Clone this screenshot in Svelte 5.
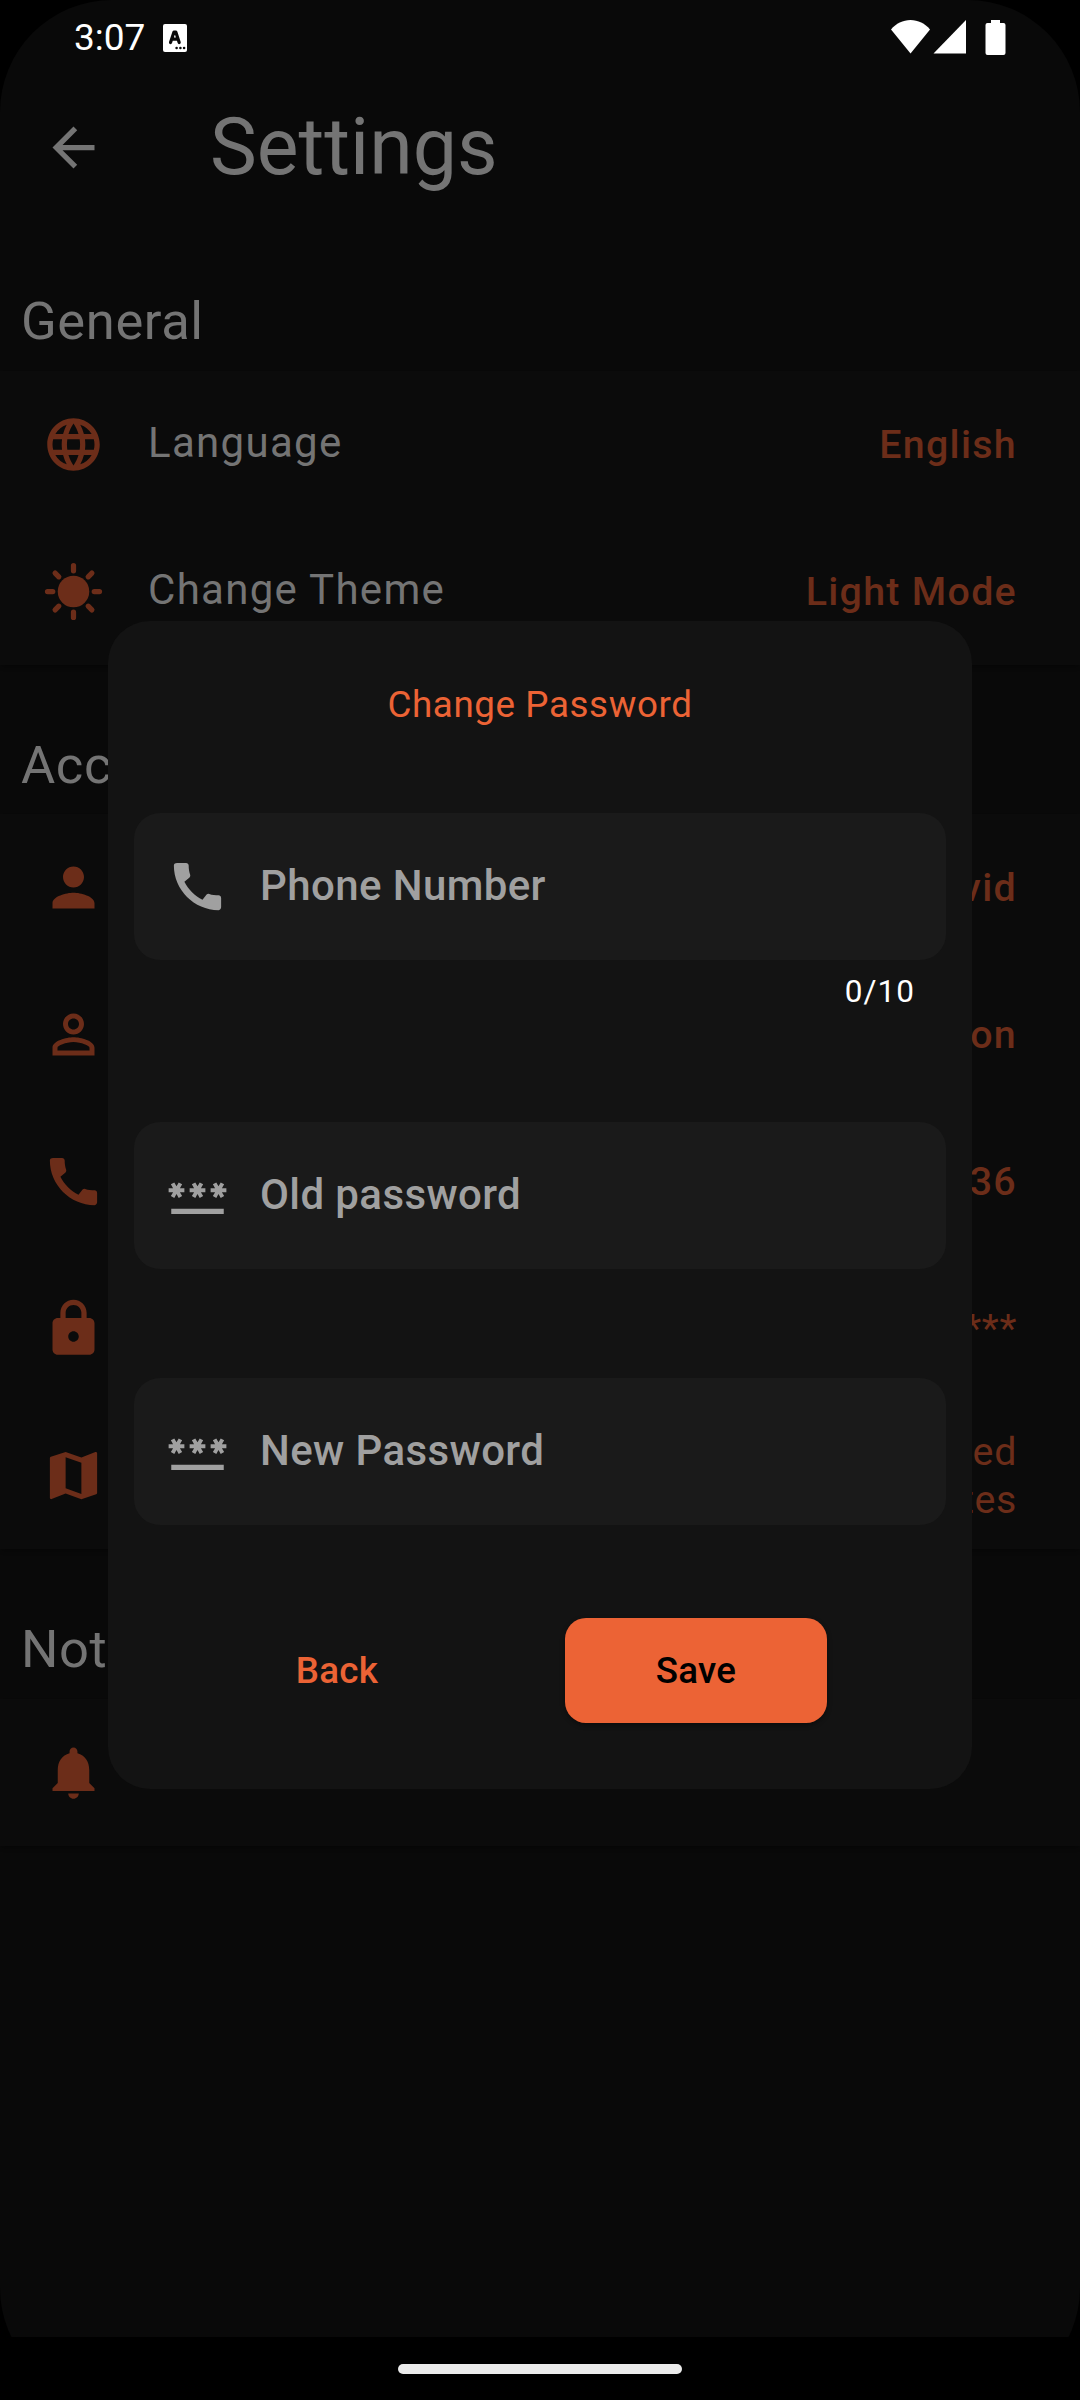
<script>
  const icons = {
    back: 'M20 11H7.83l5.59-5.59L12 4l-8 8 8 8 1.41-1.41L7.83 13H20v-2z',
    globe:
      'M11.99 2C6.47 2 2 6.48 2 12s4.47 10 9.99 10C17.52 22 22 17.52 22 12S17.52 2 11.99 2zm6.93 6h-2.95a15.65 15.65 0 0 0-1.38-3.56A8.03 8.03 0 0 1 18.92 8zM12 4.04c.83 1.2 1.48 2.53 1.91 3.96h-3.82c.43-1.43 1.08-2.76 1.91-3.96zM4.26 14C4.1 13.36 4 12.69 4 12s.1-1.36.26-2h3.38c-.08.66-.14 1.32-.14 2s.06 1.34.14 2H4.26zm.82 2h2.95c.32 1.25.78 2.45 1.38 3.56A7.987 7.987 0 0 1 5.08 16zm2.95-8H5.08a7.987 7.987 0 0 1 4.33-3.56A15.65 15.65 0 0 0 8.03 8zM12 19.96c-.83-1.2-1.48-2.53-1.91-3.96h3.82c-.43 1.43-1.08 2.76-1.91 3.96zM14.34 14H9.66c-.09-.66-.16-1.32-.16-2s.07-1.35.16-2h4.68c.09.65.16 1.32.16 2s-.07 1.34-.16 2zm.25 5.56c.6-1.11 1.06-2.31 1.38-3.56h2.95a8.03 8.03 0 0 1-4.33 3.56zM16.36 14c.08-.66.14-1.32.14-2s-.06-1.34-.14-2h3.38c.16.64.26 1.31.26 2s-.1 1.36-.26 2h-3.38z',
    person:
      'M12 12c2.21 0 4-1.79 4-4s-1.79-4-4-4-4 1.79-4 4 1.79 4 4 4zm0 2c-2.67 0-8 1.34-8 4v2h16v-2c0-2.66-5.33-4-8-4z',
    personOutline:
      'M12 5.9c1.16 0 2.1.94 2.1 2.1s-.94 2.1-2.1 2.1S9.9 9.16 9.9 8s.94-2.1 2.1-2.1m0 9c2.97 0 6.1 1.46 6.1 2.1v1.1H5.9V17c0-.64 3.13-2.1 6.1-2.1M12 4C9.79 4 8 5.79 8 8s1.79 4 4 4 4-1.79 4-4-1.79-4-4-4zm0 9c-2.67 0-8 1.34-8 4v3h16v-3c0-2.66-5.33-4-8-4z',
    call:
      'M20.01 15.38c-1.23 0-2.42-.2-3.53-.56a.977.977 0 0 0-1.01.24l-1.57 1.97c-2.83-1.35-5.48-3.9-6.89-6.83l1.95-1.66c.27-.28.35-.67.24-1.02-.37-1.11-.56-2.3-.56-3.53 0-.54-.45-.99-.99-.99H4.19C3.65 3 3 3.24 3 3.99 3 13.28 10.73 21 20.01 21c.71 0 .99-.63.99-1.18v-3.45c0-.54-.45-.99-.99-.99z',
    lock:
      'M18 8h-1V6c0-2.76-2.24-5-5-5S7 3.24 7 6v2H6c-1.1 0-2 .9-2 2v10c0 1.1.9 2 2 2h12c1.1 0 2-.9 2-2V10c0-1.1-.9-2-2-2zm-6 9c-1.1 0-2-.9-2-2s.9-2 2-2 2 .9 2 2-.9 2-2 2zM9 8V6c0-1.66 1.34-3 3-3s3 1.34 3 3v2H9z',
    map:
      'M20.5 3l-.16.03L15 5.1 9 3 3.36 4.9c-.21.07-.36.25-.36.48V20.5c0 .28.22.5.5.5l.16-.03L9 18.9l6 2.1 5.64-1.9c.21-.07.36-.25.36-.48V3.5c0-.28-.22-.5-.5-.5zM15 19l-6-2.11V5l6 2.11V19z',
    bell:
      'M12 22c1.1 0 2-.9 2-2h-4c0 1.1.89 2 2 2zm6-6v-5c0-3.07-1.64-5.64-4.5-6.32V4c0-.83-.67-1.5-1.5-1.5s-1.5.67-1.5 1.5v.68C7.63 5.36 6 7.92 6 11v5l-2 2v1h16v-1l-2-2z',
    password:
      'M2 17h20v2H2v-2zm1.15-4.05L4 11.47l.85 1.48 1.3-.75-.85-1.48H7v-1.5H5.3l.85-1.47L4.85 7 4 8.47 3.15 7l-1.3.75.85 1.47H1v1.5h1.7l-.85 1.48 1.3.75zm6.7-.75l1.3.75.85-1.48.85 1.48 1.3-.75-.85-1.48H15v-1.5h-1.7l.85-1.47-1.3-.75L12 8.47 11.15 7l-1.3.75.85 1.47H9v1.5h1.7l-.85 1.48zM23 9.22h-1.7l.85-1.47-1.3-.75L20 8.47 19.15 7l-1.3.75.85 1.47H17v1.5h1.7l-.85 1.48 1.3.75.85-1.48.85 1.48 1.3-.75-.85-1.48H23v-1.5z'
  };

  const sections = [
    {
      title: 'General',
      rows: [
        { icon: 'globe', label: 'Language', value: 'English' },
        { icon: 'sun', label: 'Change Theme', value: 'Light Mode' }
      ]
    },
    {
      title: 'Acco',
      rows: [
        { icon: 'person', value: 'vid' },
        { icon: 'personOutline', value: 'on' },
        { icon: 'call', value: '36' },
        { icon: 'lock', value: '***', light: true },
        { icon: 'map', value: 'ted\ntes', light: true }
      ]
    },
    { title: 'Not', rows: [{ icon: 'bell', value: '' }] }
  ];

  const fields = [
    { icon: 'call', label: 'Phone Number', counter: '0/10' },
    { icon: 'password', label: 'Old password' },
    { icon: 'password', label: 'New Password' }
  ];
</script>

{#snippet icon(name)}
  <svg class="icon" viewBox="0 0 24 24" aria-hidden="true">
    {#if name === 'sun'}
      <circle cx="12" cy="12" r="6" />
      <path
        class="rays"
        d="M12 2.1v2M12 19.9v2M2.1 12h2M19.9 12h2M5 5l1.4 1.4M17.6 17.6L19 19M5 19l1.4-1.4M17.6 6.4L19 5"
      />
    {:else}
      <path fill-rule="evenodd" d={icons[name]} />
    {/if}
  </svg>
{/snippet}

<div class="device">
  <div class="screen">
    <div class="status">
      <span class="time">3:07</span>
      <svg class="badge" viewBox="0 0 24 28" aria-hidden="true">
        <rect width="24" height="28" rx="2" fill="#fff" />
        <path
          d="M7.5 18.6L11 8h1.8L16.2 18.6M9 15.2h6"
          fill="none"
          stroke="#090909"
          stroke-width="3.2"
          stroke-linecap="round"
          stroke-linejoin="round"
        />
        <circle cx="13.6" cy="24" r="1.3" />
        <circle cx="17.4" cy="24" r="1.3" />
        <circle cx="21.1" cy="24" r="1.3" />
      </svg>
      <svg class="signals" viewBox="0 0 115 35" aria-hidden="true">
        <path d="M0 9.5C5 3.5 12 0 19.5 0S34 3.5 39 9.5L19.5 33.5z" />
        <path d="M75 0v33.5H42.5z" />
        <path
          d="M100 0h9v3h3.5a2 2 0 0 1 2 2v28a2 2 0 0 1-2 2h-16a2 2 0 0 1-2-2V5a2 2 0 0 1 2-2h3.5z"
        />
      </svg>
    </div>

    <header>
      {@render icon('back')}
      <h1>Settings</h1>
    </header>

    {#each sections as section}
      <h2>{section.title}</h2>
      <ul>
        {#each section.rows as row}
          <li>
            {@render icon(row.icon)}
            <span class="label">{row.label ?? ''}</span>
            <span class="value" class:light={row.light}>{row.value}</span>
          </li>
        {/each}
      </ul>
    {/each}
  </div>

  <div class="navbar"><span class="handle"></span></div>

  <div class="overlay">
    <div class="dialog">
      <h3>Change Password</h3>
      {#each fields as field}
        <div class="group" class:counted={field.counter}>
          <div class="field">
            {@render icon(field.icon)}
            <span>{field.label}</span>
          </div>
          {#if field.counter}<div class="counter">{field.counter}</div>{/if}
        </div>
      {/each}
      <div class="actions">
        <button class="text">Back</button>
        <button class="filled">Save</button>
      </div>
    </div>
  </div>
</div>

<style>
  :global(body) {
    background: #000;
  }
  .device {
    position: relative;
    width: 1080px;
    height: 2400px;
    overflow: hidden;
    border-radius: 112px;
    background: #000;
    font-family: Roboto, sans-serif;
    color: #747474;
  }
  .screen {
    height: 2337px;
    background: #090909;
  }
  .icon {
    display: block;
    flex: none;
    width: 63px;
    height: 63px;
    fill: currentColor;
  }
  .rays {
    stroke: currentColor;
    stroke-width: 2;
    stroke-linecap: round;
  }
  .status {
    display: flex;
    align-items: center;
    box-sizing: border-box;
    height: 74px;
    padding: 0 74px;
    color: #fff;
  }
  .time {
    width: 89px;
    padding-top: 1px;
    font-size: 37px;
    line-height: 74px;
  }
  .badge {
    width: 24px;
    height: 28px;
    margin-top: 2px;
    fill: #090909;
  }
  .signals {
    width: 115px;
    height: 35px;
    margin-left: auto;
    fill: #fff;
  }
  header {
    display: flex;
    align-items: center;
    height: 148px;
    padding-left: 42px;
  }
  header .icon {
    margin-bottom: 2px;
  }
  h1 {
    margin: -2px 0 0 105px;
    font-size: 78.75px;
    font-weight: 400;
  }
  h2 {
    box-sizing: border-box;
    height: 149px;
    margin: 0;
    padding: 68px 21px 0;
    font-size: 52.5px;
    font-weight: 400;
    line-height: 63px;
    letter-spacing: 0.6px;
  }
  ul + h2 {
    padding-top: 69px;
  }
  h2:last-of-type {
    height: 150px;
  }
  ul {
    margin: 0;
    padding: 0;
    list-style: none;
    background: #0b0b0b;
    box-shadow: 0 3px 4px -1px rgba(0, 0, 0, 0.3);
  }
  li {
    display: flex;
    align-items: center;
    box-sizing: border-box;
    height: 147px;
    padding: 0 63px 0 42px;
    color: #6c2d19;
  }
  .label {
    margin: -4px 0 0 43px;
    font-size: 42px;
    letter-spacing: 1.3px;
    color: #747474;
  }
  .value {
    margin-left: auto;
    font-size: 39.375px;
    font-weight: 500;
    line-height: 48px;
    letter-spacing: 1.3px;
    text-align: right;
    white-space: pre-line;
  }
  .value.light {
    font-weight: 400;
    letter-spacing: 0.65px;
  }
  .navbar {
    display: flex;
    align-items: center;
    justify-content: center;
    height: 63px;
    background: #000;
  }
  .handle {
    width: 284px;
    height: 10px;
    border-radius: 5px;
    background: #ebebeb;
  }
  .overlay {
    position: absolute;
    inset: 0;
    padding: 621px 108px 0;
  }
  .dialog {
    box-sizing: border-box;
    height: 1168px;
    padding: 0 26px;
    border-radius: 42px;
    background: #131313;
  }
  h3 {
    height: 192px;
    margin: 0;
    font-size: 36.75px;
    font-weight: 400;
    line-height: 168px;
    letter-spacing: 0.6px;
    text-align: center;
    color: #ec6335;
  }
  .group {
    height: 256px;
  }
  .group.counted {
    height: 309px;
  }
  .field {
    display: flex;
    align-items: center;
    gap: 31px;
    box-sizing: border-box;
    height: 147px;
    padding-left: 32px;
    border-radius: 26px;
    background: #1a1a1a;
    color: #a0a0a0;
    font-size: 42px;
    font-weight: 500;
    letter-spacing: 0.4px;
  }
  .field span {
    margin-top: -3px;
  }
  .counter {
    padding: 13px 31px 0 0;
    font-size: 31.5px;
    line-height: 37px;
    letter-spacing: 1.05px;
    text-align: right;
    color: #fff;
  }
  .actions {
    display: flex;
    gap: 97px;
    padding-left: 72px;
    margin-top: -16px;
  }
  button {
    width: 262px;
    height: 105px;
    padding: 0;
    border: 0;
    border-radius: 21px;
    font: 500 36.75px Roboto, sans-serif;
    letter-spacing: 0.26px;
  }
  .text {
    background: none;
    color: #ec6335;
  }
  .filled {
    background: #ec6335;
    color: #000;
    box-shadow: 0 2px 5px rgba(0, 0, 0, 0.4);
  }
</style>
